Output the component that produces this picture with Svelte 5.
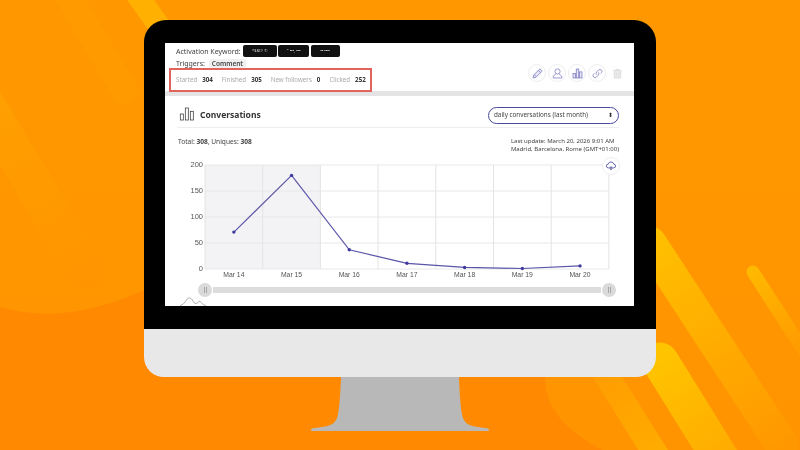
<script>
  const H = 104;
  const cw = 57.7;
  const data = [71, 180, 37, 11, 3, 1, 6];
  const labels = ['Mar 14','Mar 15','Mar 16','Mar 17','Mar 18','Mar 19','Mar 20'];
  const xs = data.map((_, i) => cw * i + cw / 2);
  const ys = data.map((v) => H - (v / 200) * H);
  const line = xs.map((x, i) => `${x.toFixed(1)},${ys[i].toFixed(1)}`).join(' ');
  const hGrid = [0, 26, 52, 78, 104];
  const vGrid = [0, 1, 2, 3, 4, 5, 6, 7].map((i) => i * cw);
</script>

<div class="stage">
  <svg class="bg" viewBox="0 0 800 450" aria-hidden="true">
    <defs>
      <linearGradient id="a" gradientUnits="userSpaceOnUse" x1="650" y1="240" x2="785" y2="445">
        <stop offset="0" stop-color="#ffc000"/>
        <stop offset="1" stop-color="#ff9800"/>
      </linearGradient>
      <linearGradient id="b" gradientUnits="userSpaceOnUse" x1="660" y1="355" x2="745" y2="490">
        <stop offset="0" stop-color="#ffc400"/>
        <stop offset="1" stop-color="#ffa400"/>
      </linearGradient>
      <linearGradient id="c" gradientUnits="userSpaceOnUse" x1="753" y1="272" x2="800" y2="345">
        <stop offset="0" stop-color="#ffb800"/>
        <stop offset="1" stop-color="#ff9c00"/>
      </linearGradient>
      <linearGradient id="d" gradientUnits="userSpaceOnUse" x1="600" y1="365" x2="670" y2="477">
        <stop offset="0" stop-color="#ff9c00"/>
        <stop offset="1" stop-color="#ffb000"/>
      </linearGradient>
      <linearGradient id="e" gradientUnits="userSpaceOnUse" x1="0" y1="105" x2="95" y2="285">
        <stop offset="0" stop-color="#ff9f00"/>
        <stop offset="1" stop-color="#ff9400"/>
      </linearGradient>
      <linearGradient id="base" x1="0" y1="0" x2="0" y2="1">
        <stop offset="0" stop-color="#ff9800"/>
        <stop offset="1" stop-color="#ff9400"/>
      </linearGradient>
    </defs>
    <rect width="800" height="450" fill="#ff8900"/>
    <path d="M0 0H800V450H602C570 432 545 412 545 377L144 290C100 310 50 322 0 307Z" fill="url(#base)"/>
    <line x1="-20" y1="95" x2="85" y2="270" stroke="url(#e)" stroke-width="38" stroke-linecap="round"/>
    <line x1="65" y1="-10" x2="130" y2="100" stroke="#ff9b00" stroke-width="26"/>
    <line x1="130" y1="-15" x2="162" y2="30" stroke="#ffb000" stroke-width="22"/>
    <line x1="650" y1="243" x2="782" y2="445" stroke="url(#a)" stroke-width="33" stroke-linecap="round"/>
    <line x1="660" y1="361" x2="740" y2="490" stroke="url(#b)" stroke-width="37" stroke-linecap="round"/>
    <line x1="753" y1="272" x2="815" y2="368" stroke="url(#c)" stroke-width="13" stroke-linecap="round"/>
    <line x1="600" y1="365" x2="670" y2="477" stroke="url(#d)" stroke-width="25"/>
  </svg>

  <div class="monitor">
    <div class="bezel">
      <div class="screen">
        <section class="head">
          <div class="kw">Activation Keyword:<span class="pill p1">*$&amp;!!! ①</span><span class="pill p2">⌃ ▪▪▪, ▪▪▪</span><span class="pill p3">▪▪ ▪▪▪▪</span></div>
          <div class="tr">Triggers: <span class="tag">Comment</span></div>
          <div class="statsrow">
            <div class="stats">
              <span class="mut">Started</span><b>304</b>
              <span class="mut">Finished</span><b>305</b>
              <span class="mut">New followers</span><b>0</b>
              <span class="mut">Clicked</span><b>252</b>
            </div>
            <div class="actions">
              <span class="ic"><svg viewBox="0 0 16 16"><path d="M2.500 13.500l.8-3.600 6.800-6.800a1.500 1.500 0 0 1 2.200 0l.6.6a1.500 1.500 0 0 1 0 2.200l-6.800 6.800zM9 4.200l2.800 2.800M4 9.300l2.700 2.700"/></svg></span>
              <span class="ic plain"><svg viewBox="0 0 16 16"><circle cx="8" cy="5.500" r="3.200"/><path d="M5.800 8.500c.3 1.200-3 1.300-3 3.200v1.800h10.400v-1.800c0-1.900-3.300-2-3-3.200"/></svg></span>
              <span class="ic"><svg viewBox="0 0 16 16"><rect x="2.500" y="8" width="3" height="5.500"/><rect x="6.500" y="2.500" width="3" height="11"/><rect x="10.500" y="6" width="3" height="7.500"/></svg></span>
              <span class="ic plain"><svg viewBox="0 0 16 16"><path d="M7 9.500a2.500 2.500 0 0 1 0-3.500l2.500-2.500a2.500 2.500 0 0 1 3.500 3.500l-1.200 1.200M9 6.500a2.500 2.500 0 0 1 0 3.500l-2.500 2.500a2.500 2.500 0 0 1-3.500-3.500l1.200-1.200"/></svg></span>
              <span class="ic off"><svg viewBox="0 0 16 16"><path d="M3 4.500h10M6 4.500V3h4v1.500M4 4.500v9h8v-9M6.500 6.500v5M9.500 6.500v5"/></svg></span>
            </div>
          </div>
        </section>
        <div class="divider"></div>
        <section class="card">
          <div class="cardhead">
            <svg class="bars" viewBox="0 0 24 22"><rect x="2" y="11" width="4.500" height="9"/><rect x="9.500" y="2" width="4.500" height="18"/><rect x="17" y="7" width="4.500" height="13"/></svg>
            <h2>Conversations</h2>
            <div class="select">daily conversations (last month)<span class="arrows">⬍</span></div>
          </div>
          <div class="meta">
            <div class="tot">Total: <b>308</b>, Uniques: <b>308</b></div>
            <div class="upd">Last update: March 20, 2026 9:01 AM<br/>Madrid, Barcelona, Rome (GMT+01:00)</div>
          </div>
          <div class="chart">
            <div class="yaxis">
              {#each [200,150,100,50,0] as t}<span>{t}</span>{/each}
            </div>
            <div class="plotwrap">
              <div class="plot">
                <svg viewBox="0 0 404 104">
                  <rect x="0" y="0" width={cw * 2} height={H} fill="#f3f3f5"/>
                  {#each hGrid as y}<line x1="0" x2="404" y1={y} y2={y} stroke="#e8e8ea"/>{/each}
                  {#each vGrid as x}<line x1={x} x2={x} y1="0" y2={H} stroke="#e4e4e6"/>{/each}
                  <polyline points={line} fill="none" stroke="#5a55a8" stroke-width="1.200"/>
                  {#each xs as x, i}<circle cx={x} cy={ys[i]} r="1.700" fill="#3f3a9e"/>{/each}
                </svg>
                <span class="cloud"><svg viewBox="0 0 16 16"><path d="M4.500 10.500a2.500 2.500 0 0 1-.2-5 3.800 3.800 0 0 1 7.400 0 2.500 2.500 0 0 1-.2 5zM8 8v5M6.500 11.500L8 13l1.500-1.500"/></svg></span>
              </div>
              <div class="xaxis">
                {#each labels as l}<span>{l}</span>{/each}
              </div>
              <div class="slider">
                <span class="knob"><i></i><i></i></span>
                <span class="track"></span>
                <span class="knob"><i></i><i></i></span>
              </div>
            </div>
          </div>
          <svg class="mini" viewBox="0 0 26 9"><path d="M0 8.500C5 8 6 1 9.500 1S13 7 16 6.500 18 3.500 20 4.500 22 8 26 8.500" fill="none" stroke="#777" stroke-width=".6"/></svg>
        </section>
      </div>
    </div>
    <div class="chin"></div>
    <svg class="stand" viewBox="0 0 178 54"><path d="M30 0H148C148.500 14 149.500 30 151 37C152 44 156 48.500 164 49.500C170 50.500 174 51 177 51.500C178.500 52.500 178 54 177 54H1C0 54 -.5 52.500 1 51.500C4 51 8 50.500 14 49.500C22 48.500 26 44 27 37C28.500 30 29.500 14 30 0Z" fill="#b8b8b8"/></svg>
  </div>
</div>

<style>
  :global(body) { margin: 0; }
  .stage { position: relative; width: 800px; height: 450px; overflow: hidden; display: flex; justify-content: center; font-family: "Noto Sans", "Liberation Sans", sans-serif; color: #444; }
  .bg { position: absolute; inset: 0; width: 800px; height: 450px; }
  .monitor { position: relative; width: 512px; margin-top: 20px; display: flex; flex-direction: column; align-items: center; }
  .bezel { width: 100%; box-sizing: border-box; height: 309px; background: #000; border-radius: 22px 22px 0 0; padding: 23px 22px 23px 21px; }
  .screen { width: 469px; height: 263px; background: #fff; overflow: hidden; display: flex; flex-direction: column; filter: blur(.35px); }
  .chin { width: 100%; height: 48px; background: #e8e8e8; border-radius: 0 0 20px 20px; flex: none; }
  .stand { width: 178px; height: 54px; display: block; flex: none; }

  .head { height: 48px; flex: none; position: relative; z-index: 1; box-sizing: border-box; padding: 2px 10px 0 11px; font-size: 7px; }
  .kw { display: flex; align-items: center; height: 12px; white-space: pre; }
  .pill { background: #111; color: #ddd; font-size: 4px; border-radius: 2px; height: 12px; line-height: 12px; box-sizing: border-box; text-align: center; overflow: hidden; }
  .p1 { width: 34px; margin-left: 2px; }
  .p2 { width: 31px; margin-left: 1px; }
  .p3 { width: 29px; margin-left: 2px; }
  .tr { margin-top: 1px; height: 11px; line-height: 11px; }
  .tag { background: #f0f0f0; border-radius: 3px; padding: 0 3px; font-weight: 600; font-size: 6.500px; margin-left: 2px; }
  .statsrow { display: flex; justify-content: space-between; align-items: center; margin-top: -1px; }
  .stats { outline: 2px solid #e0645c; outline-offset: -2px; margin-left: -7px; width: 203px; height: 24px; box-sizing: border-box; padding: 0 7px 1px; display: flex; align-items: center; font-size: 6.200px; white-space: nowrap; }
  .stats .mut { color: #aaa; margin-right: 5px; }
  .stats b { color: #333; margin-right: 9px; font-weight: 700; }
  .actions { display: flex; gap: 2px; margin-right: -2px; margin-top: -14px; }
  .ic { width: 18px; height: 18px; box-sizing: border-box; border: 1px solid #eee; border-radius: 50%; display: flex; align-items: center; justify-content: center; color: #8380c4; }
  .ic svg { width: 13px; height: 13px; fill: #e6e6f4; stroke: currentColor; stroke-width: 1; }
  .ic.plain svg { fill: none; }
  .ic.off { border: none; color: #d8d8d8; }
  .ic.off svg { fill: #eee; }
  .divider { height: 5px; flex: none; background: #e4e4e4; }

  .card { flex: 1; padding: 0 15px 0 12px; position: relative; }
  .cardhead { display: flex; align-items: center; box-sizing: border-box; height: 32px; padding-top: 5px; border-bottom: 1px solid #eee; }
  .bars { width: 16px; height: 16px; fill: none; stroke: #444; stroke-width: 1.200; margin: 0 5px 0 2px; }
  h2 { font-size: 8.500px; font-weight: 700; margin: 0; color: #333; flex: 1; }
  .select { width: 131px; height: 17px; margin-top: 3px; box-sizing: border-box; border: 1.500px solid #4a4a9c; border-radius: 9px; font-size: 6.300px; line-height: 14px; padding: 0 5px; display: flex; justify-content: space-between; color: #444; }
  .arrows { font-size: 6px; color: #333; }
  .meta { display: flex; justify-content: space-between; margin-top: 9px; height: 28px; font-size: 6.300px; }
  .tot { line-height: 9px; font-size: 6.600px; padding-left: 1px; }
  .upd { line-height: 7.500px; font-size: 6px; padding-top: 1px; }
  .chart { display: flex; }
  .yaxis { width: 28px; height: 104px; flex: none; display: flex; flex-direction: column; justify-content: space-between; text-align: right; font-family: "Liberation Sans", sans-serif; font-size: 7.500px; color: #555; line-height: 0; padding-right: 2px; box-sizing: border-box; }
  .plotwrap { width: 404px; flex: none; }
  .plot { position: relative; width: 404px; height: 104px; }
  .plot > svg { width: 404px; height: 104px; display: block; overflow: visible; }
  .cloud { position: absolute; right: -11px; top: -8px; width: 18px; height: 18px; box-sizing: border-box; background: #fff; border: 1px solid #eee; border-radius: 50%; display: flex; align-items: center; justify-content: center; }
  .cloud svg { width: 12px; height: 12px; fill: none; stroke: #55559f; stroke-width: 1.200; }
  .xaxis { display: grid; grid-template-columns: repeat(7, 57.700px); font-family: "Liberation Sans", sans-serif; font-size: 6.800px; color: #555; height: 14px; line-height: 12px; }
  .xaxis span { text-align: center; }
  .slider { display: flex; align-items: center; gap: 1px; height: 14px; margin: 0 -7px; }
  .knob { width: 14px; height: 14px; border-radius: 50%; background: #dadada; flex: none; display: flex; align-items: center; justify-content: center; gap: 1px; }
  .knob i { width: 1px; height: 6px; background: #a8a8a8; }
  .track { flex: 1; height: 6px; background: #dcdcdc; }
  .mini { position: absolute; left: 15px; bottom: 0; width: 26px; height: 9px; }
</style>
